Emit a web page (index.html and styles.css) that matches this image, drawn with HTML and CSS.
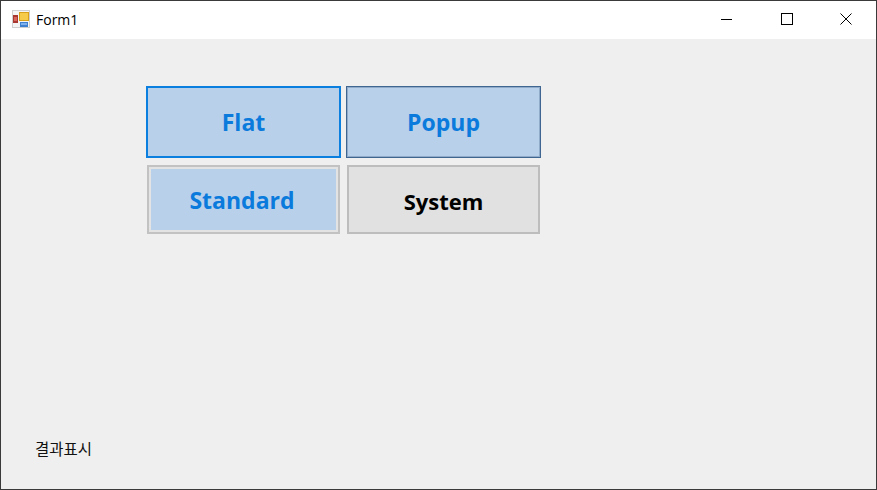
FILE: index.html
```html
<!DOCTYPE html>
<html lang="ko">
<head>
<meta charset="utf-8">
<title>Form1</title>
<link rel="stylesheet" href="styles.css">
</head>
<body>
<div class="window">
  <header class="titlebar">
    <svg class="app-icon" width="18" height="18" viewBox="0 0 18 18">
      <rect x="0" y="0" width="18" height="18" fill="#cfcfcf"/>
      <rect x="1" y="1" width="16" height="16" fill="#f4f4f4"/>
      <rect x="1" y="5" width="5" height="8" fill="#a8382f"/>
      <rect x="2" y="7" width="3" height="4" fill="#d9655a"/>
      <rect x="7" y="2" width="10" height="9" fill="#d9a01a"/>
      <rect x="8" y="3" width="8" height="7" fill="#f6cb4a"/>
      <rect x="8" y="12" width="8" height="5" fill="#3f7fd0"/>
      <rect x="9" y="13" width="6" height="2" fill="#7fb0ea"/>
    </svg>
    <span class="title">Form1</span>
    <div class="controls">
      <div class="ctl">
        <svg width="12" height="12" viewBox="0 0 12 12"><path d="M0 6.5H11" stroke="#000" stroke-width="1" fill="none"/></svg>
      </div>
      <div class="ctl">
        <svg width="12" height="12" viewBox="0 0 12 12"><rect x="0.5" y="0.5" width="11" height="11" stroke="#000" stroke-width="1" fill="none"/></svg>
      </div>
      <div class="ctl">
        <svg width="12" height="12" viewBox="0 0 12 12"><path d="M0.5 0.5L11.5 11.5M11.5 0.5L0.5 11.5" stroke="#000" stroke-width="1" fill="none"/></svg>
      </div>
    </div>
  </header>
  <main class="client">
    <div class="buttons">
      <button class="btn flat">Flat</button>
      <button class="btn popup">Popup</button>
      <button class="btn standard">Standard</button>
      <button class="btn system">System</button>
    </div>
    <div class="result">결과표시</div>
  </main>
</div>
</body>
</html>
```
FILE: styles.css
```css
* { box-sizing: border-box; }
html, body { margin: 0; padding: 0; }
body { width: 877px; height: 490px; overflow: hidden; }
.window {
  width: 877px;
  height: 490px;
  border: 1px solid #3a3a3a;
  display: flex;
  flex-direction: column;
  background: #efefef;
  font-family: "Noto Sans CJK KR", "Noto Sans", sans-serif;
}
.titlebar {
  height: 38px;
  background: #fff;
  display: flex;
  align-items: center;
  padding-left: 11px;
  flex: none;
}
.app-icon { margin-top: -2px; }
.title {
  margin-left: 6px;
  margin-top: -1px;
  font-family: "Open Sans", "Noto Sans", sans-serif;
  font-size: 14px;
  color: #000;
}
.controls { margin-left: auto; display: flex; margin-top: -2px; }
.ctl {
  width: 59.5px;
  height: 36px;
  display: flex;
  align-items: center;
  justify-content: center;
}
.client {
  flex: 1;
  display: flex;
  flex-direction: column;
  padding: 47px 0 0 145px;
}
.buttons {
  display: grid;
  grid-template-columns: 195px 195px;
  grid-template-rows: 72px 71px;
  column-gap: 5px;
  row-gap: 6px;
}
.btn {
  font-family: "Open Sans", "Noto Sans", sans-serif;
  font-size: 23px;
  font-weight: 700;
  padding: 0;
  background: #b9d0eb;
  color: #0a7bdc;
}
.flat { border: 2px solid #0a7fdf; padding-bottom: 1px; }
.popup { border: 1px solid #3f6690; box-shadow: inset 0 0 0 1px #8fabc9; padding-bottom: 1px; }
.standard {
  margin: 1px;
  height: 69px;
  border: 2px solid #c2c2c2;
  box-shadow: inset 0 0 0 2px #e3e3e3;
  padding: 0 3px 0 0;
}
.system {
  margin: 1px;
  height: 69px;
  border: 2px solid #bdbdbd;
  background: #e1e1e1;
  color: #000;
  font-size: 22px;
  padding-top: 3px;
}
.result {
  margin: auto 0 31px -111px;
  font-size: 15.5px;
  line-height: 20px;
  color: #111;
}
```
